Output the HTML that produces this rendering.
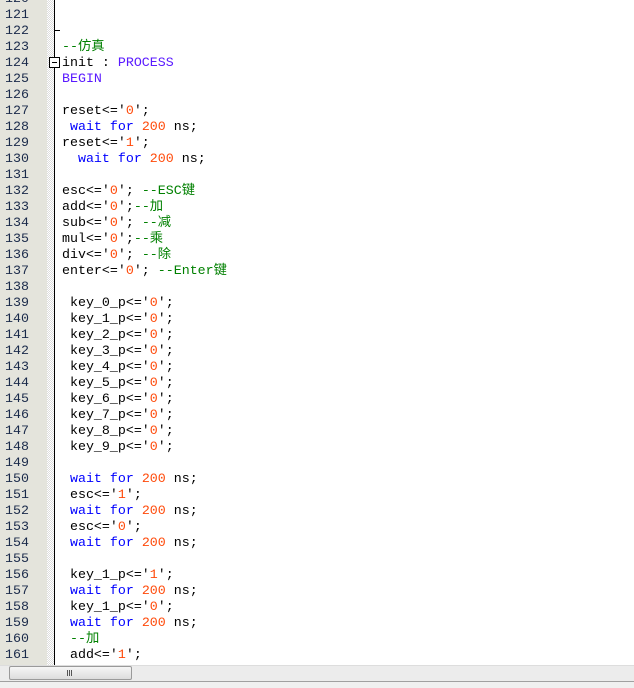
<!DOCTYPE html>
<html><head><meta charset="utf-8"><style>
html,body{margin:0;padding:0;width:634px;height:687px;overflow:hidden;background:#fff;}
#g{position:absolute;left:0;top:0;width:47px;height:665px;background:#e4e4dc;}
#m{position:absolute;left:47px;top:0;width:8px;height:665px;
background-image:linear-gradient(45deg,#ddd 25%,transparent 25%,transparent 75%,#ddd 75%),linear-gradient(45deg,#ddd 25%,transparent 25%,transparent 75%,#ddd 75%);
background-size:2px 2px;background-position:0 0,1px 1px;background-color:#fff;}
#fl{position:absolute;left:54px;top:0;width:1px;height:665px;background:#000;}
#tick{position:absolute;left:54px;top:30px;width:6px;height:1px;background:#000;}
#box{position:absolute;left:49px;top:57px;width:9px;height:9px;border:1px solid #000;background:#fff;}
#box:after{content:"";position:absolute;left:2px;top:4px;width:5px;height:1px;background:#000;}
.l{position:absolute;left:0;height:16px;line-height:16px;white-space:pre;font-family:"Liberation Mono","Noto Sans CJK SC",monospace;font-size:13.3px;}
.n{position:absolute;left:5px;color:#1a2a4a;}
.c{position:absolute;left:62px;color:#000;}
.k{color:#0000ff}.p{color:#5a1aff}.o{color:#ff4a0a}.g{color:#008000}
#sb{position:absolute;left:0;top:665px;width:634px;height:16px;background:#ececec;border-top:1px solid #ddd;}
#th{position:absolute;left:9px;top:666px;width:121px;height:12px;border:1px solid #9a9a9a;border-radius:2px;background:linear-gradient(#f6f6f6,#dcdcdc);}
#th span{position:absolute;left:57px;top:3px;width:1px;height:6px;background:#555;box-shadow:2px 0 #555,4px 0 #555;}
#bt{position:absolute;left:0;top:681px;width:634px;height:6px;background:#f0f0f0;border-top:1px solid #a0a0a0;}
</style></head><body>
<div id="g"></div><div id="m"></div><div id="fl"></div><div id="tick"></div><div id="box"></div>
<div id="lines"></div>
<script>
var L=[
["120",""],["121",""],["122",""],
["123",'<span class="g">--仿真</span>'],
["124",'init : <span class="p">PROCESS</span>'],
["125",'<span class="p">BEGIN</span>'],
["126",""],
["127","reset&lt;='<span class=o>0</span>';"],
["128",' <span class=k>wait for</span> <span class=o>200</span> ns;'],
["129","reset&lt;='<span class=o>1</span>';"],
["130",'  <span class=k>wait for</span> <span class=o>200</span> ns;'],
["131",""],
["132","esc&lt;='<span class=o>0</span>'; <span class=g>--ESC键</span>"],
["133","add&lt;='<span class=o>0</span>';<span class=g>--加</span>"],
["134","sub&lt;='<span class=o>0</span>'; <span class=g>--减</span>"],
["135","mul&lt;='<span class=o>0</span>';<span class=g>--乘</span>"],
["136","div&lt;='<span class=o>0</span>'; <span class=g>--除</span>"],
["137","enter&lt;='<span class=o>0</span>'; <span class=g>--Enter键</span>"],
["138",""]];
for(var i=0;i<10;i++)L.push([""+(139+i)," key_"+i+"_p&lt;='<span class=o>0</span>';"]);
var W=' <span class=k>wait for</span> <span class=o>200</span> ns;';
L=L.concat([["149",""],["150",W],["151"," esc&lt;='<span class=o>1</span>';"],["152",W],["153"," esc&lt;='<span class=o>0</span>';"],["154",W],["155",""],
["156"," key_1_p&lt;='<span class=o>1</span>';"],["157",W],["158"," key_1_p&lt;='<span class=o>0</span>';"],["159",W],["160",' <span class=g>--加</span>'],["161"," add&lt;='<span class=o>1</span>';"]]);
var h="";
for(var j=0;j<L.length;j++){var t=(parseInt(L[j][0])-120)*16-9;
h+='<div class="l" style="top:'+t+'px"><span class="n">'+L[j][0]+'</span><span class="c">'+L[j][1]+'</span></div>';}
document.getElementById("lines").innerHTML=h;
</script>
<div id="sb"></div><div id="th"><span></span></div><div id="bt"></div>
</body></html>
